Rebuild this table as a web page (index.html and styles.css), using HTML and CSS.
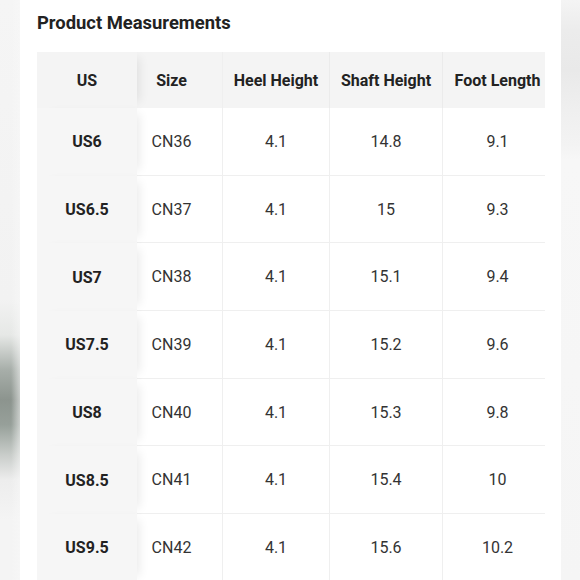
FILE: index.html
```html
<!DOCTYPE html>
<html>
<head>
<meta charset="utf-8">
<link rel="stylesheet" href="styles.css">
</head>
<body>
<div class="page">
  <div class="edge edge-left"></div>
  <main class="panel">
    <h1 class="title">Product Measurements</h1>
    <div class="table-wrap">
      <div class="grid">
        <div class="cell head key">US</div>
        <div class="cell head size">Size</div>
        <div class="cell head">Heel Height</div>
        <div class="cell head">Shaft Height</div>
        <div class="cell head">Foot Length</div>

        <div class="cell key">US6</div><div class="cell size">CN36</div><div class="cell">4.1</div><div class="cell">14.8</div><div class="cell">9.1</div>
        <div class="cell key">US6.5</div><div class="cell size">CN37</div><div class="cell">4.1</div><div class="cell">15</div><div class="cell">9.3</div>
        <div class="cell key">US7</div><div class="cell size">CN38</div><div class="cell">4.1</div><div class="cell">15.1</div><div class="cell">9.4</div>
        <div class="cell key">US7.5</div><div class="cell size">CN39</div><div class="cell">4.1</div><div class="cell">15.2</div><div class="cell">9.6</div>
        <div class="cell key">US8</div><div class="cell size">CN40</div><div class="cell">4.1</div><div class="cell">15.3</div><div class="cell">9.8</div>
        <div class="cell key">US8.5</div><div class="cell size">CN41</div><div class="cell">4.1</div><div class="cell">15.4</div><div class="cell">10</div>
        <div class="cell key">US9.5</div><div class="cell size">CN42</div><div class="cell">4.1</div><div class="cell">15.6</div><div class="cell">10.2</div>
      </div>
    </div>
  </main>
  <div class="edge edge-right"></div>
</div>
</body>
</html>
```
FILE: styles.css
```css
html, body {
  margin: 0;
  padding: 0;
  height: 100%;
  overflow: hidden;
  background: #ffffff;
  font-family: Roboto, "Liberation Sans", Arial, sans-serif;
}

.page {
  display: flex;
  height: 580px;
  width: 580px;
}

.edge {
  flex: none;
  height: 100%;
}

.edge-left {
  width: 20px;
  background:
    linear-gradient(to right, rgba(245,245,245,0) 0%, rgba(245,245,245,0) 55%, rgba(248,248,248,0.55) 100%),
    linear-gradient(to bottom, #f5f5f5 0px, #f2f2f2 300px, #e6e8e6 335px, #a7aea9 370px, #8c948e 400px, #97a09a 425px, #c9cdca 455px, #ededed 480px, #f4f4f4 520px, #f4f4f4 580px);
}

.edge-right {
  width: 19px;
  background:
    linear-gradient(to bottom, #f4f4f4 0px, #ececec 30px, #e9e9e9 70px, #efefef 110px, #f3f3f3 145px, #f7f7f7 160px, #f5f5f5 580px);
}

.panel {
  flex: 1;
  background: #ffffff;
  padding: 11px 0 0 17px;
  box-sizing: border-box;
  min-width: 0;
}

.title {
  margin: 0 0 17px 0;
  font-size: 18.4px;
  line-height: 24px;
  font-weight: 700;
  color: #222222;
  letter-spacing: 0;
}

.table-wrap {
  width: 508px;
  overflow: hidden;
}

.grid {
  display: grid;
  grid-template-columns: 100px 86px 107px 113px 110px;
  grid-template-rows: 56px repeat(7, 67.7px);
  width: 516px;
}

.cell {
  display: flex;
  align-items: center;
  justify-content: center;
  font-size: 16px;
  color: #333333;
  background: #ffffff;
  border-right: 1px solid #efefef;
  border-bottom: 1px solid #efefef;
  box-sizing: border-box;
  white-space: nowrap;
}

.cell.head {
  background: #f4f4f4;
  font-weight: 700;
  color: #222222;
  border-bottom: none;
  border-right: 1px solid #ebebeb;
}

.cell.size {
  padding-right: 16px;
  border-right: 1px solid #efefef;
}

.cell.key {
  background: #f6f6f6;
  font-weight: 700;
  color: #222222;
  border-right: none;
  border-bottom: none;
  position: relative;
  z-index: 1;
  box-shadow: 8px 0 10px -6px rgba(0, 0, 0, 0.09);
}

.cell.head.key {
  background: #f4f4f4;
}
```
